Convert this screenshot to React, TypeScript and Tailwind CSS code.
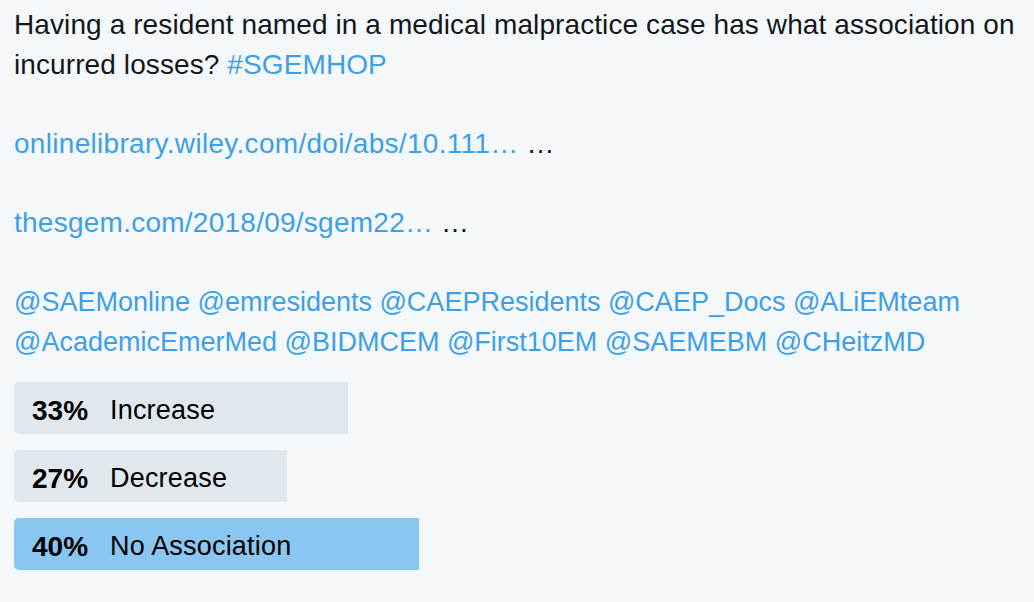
const options = [
  { pct: 33, label: "Increase", winner: false },
  { pct: 27, label: "Decrease", winner: false },
  { pct: 40, label: "No Association", winner: true },
];

const mentions = [
  "@SAEMonline",
  "@emresidents",
  "@CAEPResidents",
  "@CAEP_Docs",
  "@ALiEMteam",
  "@AcademicEmerMed",
  "@BIDMCEM",
  "@First10EM",
  "@SAEMEBM",
  "@CHeitzMD",
];

export default function App() {
  return (
    <div
      className="min-h-[602px] w-[1034px] bg-[#f5f8fa] pl-[14px] pr-[10px] pt-[5px] text-[28px] leading-[39.6px] tracking-[0.1px] text-[#14171a]"
      style={{ fontFamily: '"Liberation Sans", Arial, sans-serif' }}
    >
      <p>
        Having a resident named in a medical malpractice case has what association on
        incurred losses? <span className="text-[#3d9fe8]">#SGEMHOP</span>
      </p>
      <p className="mt-[39.6px]">
        <span className="tracking-[0.3px] text-[#3d9fe8]">onlinelibrary.wiley.com/doi/abs/10.111…</span> …
      </p>
      <p className="mt-[39.6px]">
        <span className="tracking-[0.25px] text-[#3d9fe8]">thesgem.com/2018/09/sgem22…</span> …
      </p>
      <p className="mt-[40.6px] text-[27px] tracking-[0px] text-[#3d9fe8]">{mentions.join(" ")}</p>

      <div className="mt-[20px] flex w-[1012px] flex-col gap-[16px] tracking-normal">
        {options.map((o) => (
          <div key={o.label} className="relative h-[52px]">
            <div
              className={
                "absolute inset-y-0 left-0 rounded-l-[5px] " +
                (o.winner ? "bg-[#89c6f0]" : "bg-[#e1e8ed]")
              }
              style={{ width: `${o.pct}%` }}
            />
            <div className="relative flex h-full items-center pl-[18px] pt-[4px] text-[27px] tracking-[0.2px] text-black">
              <span className="w-[78px] text-[28px] font-bold tracking-normal">{o.pct}%</span>
              <span>{o.label}</span>
            </div>
          </div>
        ))}
      </div>
    </div>
  );
}
